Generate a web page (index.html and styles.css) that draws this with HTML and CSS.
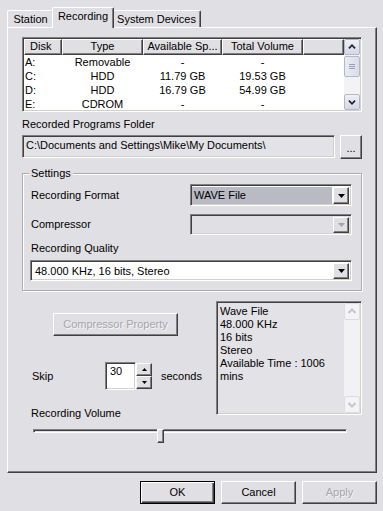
FILE: index.html
```html
<!DOCTYPE html>
<html>
<head>
<meta charset="utf-8">
<link rel="stylesheet" href="styles.css">
</head>
<body>
<div class="tabs">
  <div class="tab t1">Station</div>
  <div class="tab t2 sel">Recording</div>
  <div class="tab t3">System Devices</div>
</div>
<div class="panel">
  <div class="list">
    <div class="lmain">
      <div class="lhead">
        <div class="hc c1 left">Disk</div>
        <div class="hc c2">Type</div>
        <div class="hc c3">Available Sp...</div>
        <div class="hc c4">Total Volume</div>
        <div class="hc c5"></div>
      </div>
      <div class="lrow"><span class="c1 left">A:</span><span class="c2">Removable</span><span class="c3">-</span><span class="c4">-</span></div>
      <div class="lrow"><span class="c1 left">C:</span><span class="c2">HDD</span><span class="c3">11.79 GB</span><span class="c4">19.53 GB</span></div>
      <div class="lrow"><span class="c1 left">D:</span><span class="c2">HDD</span><span class="c3">16.79 GB</span><span class="c4">54.99 GB</span></div>
      <div class="lrow"><span class="c1 left">E:</span><span class="c2">CDROM</span><span class="c3">-</span><span class="c4">-</span></div>
    </div>
    <div class="vs">
      <div class="sb"><svg width="16" height="14" viewBox="0 0 16 14"><polyline points="4.5,8.5 8,5 11.5,8.5" fill="none" stroke="#1f2330" stroke-width="2"/></svg></div>
      <div class="sthumb"><svg width="14" height="19" viewBox="0 0 14 19"><g stroke="#9aa0b4" stroke-width="1"><line x1="4" y1="7.5" x2="10" y2="7.5"/><line x1="4" y1="9.5" x2="10" y2="9.5"/><line x1="4" y1="11.5" x2="10" y2="11.5"/></g></svg></div>
      <div class="sfill"></div>
      <div class="sb"><svg width="16" height="14" viewBox="0 0 16 14"><polyline points="4.5,5.5 8,9 11.5,5.5" fill="none" stroke="#1f2330" stroke-width="2"/></svg></div>
    </div>
  </div>

  <div class="lbl folder-lbl">Recorded Programs Folder</div>
  <div class="folder">
    <div class="tb">C:\Documents and Settings\Mike\My Documents\</div>
    <div class="raised dots">...</div>
  </div>

  <div class="grp">
    <span class="legend">Settings</span>
    <div class="frow">
      <span class="flbl">Recording Format</span>
      <div class="combo fmt"><div class="val sel-val">WAVE File</div><div class="dd"><svg width="7" height="4" viewBox="0 0 7 4"><polygon points="0,0 7,0 3.5,4" fill="#000"/></svg></div></div>
    </div>
    <div class="frow r2">
      <span class="flbl">Compressor</span>
      <div class="combo fmt dis"><div class="val"></div><div class="dd"><svg width="7" height="4" viewBox="0 0 7 4"><polygon points="0,0 7,0 3.5,4" fill="#a6a5aa"/></svg></div></div>
    </div>
    <div class="lbl qlbl">Recording Quality</div>
    <div class="combo qual"><div class="val">48.000 KHz, 16 bits, Stereo</div><div class="dd"><svg width="7" height="4" viewBox="0 0 7 4"><polygon points="0,0 7,0 3.5,4" fill="#000"/></svg></div></div>
  </div>

  <div class="lower">
    <div class="lcol">
      <div class="raised cpbtn disabled">Compressor Property</div>
      <div class="skip">
        <span class="sl">Skip</span>
        <div class="spin">
          <div class="st">30</div>
          <div class="sbs">
            <div class="raised sp"><svg width="5" height="3" viewBox="0 0 5 3"><polygon points="0,3 5,3 2.5,0" fill="#000"/></svg></div>
            <div class="raised sp"><svg width="5" height="3" viewBox="0 0 5 3"><polygon points="0,0 5,0 2.5,3" fill="#000"/></svg></div>
          </div>
        </div>
        <span class="secs">seconds</span>
      </div>
      <div class="lbl vol">Recording Volume</div>
    </div>
    <div class="info">
      <div class="itxt">Wave File<br>48.000 KHz<br>16 bits<br>Stereo<br>Available Time : 1006 mins</div>
      <div class="vs dis">
        <div class="sb"><svg width="14" height="15" viewBox="0 0 14 15"><polyline points="3.5,9 7,5.5 10.5,9" fill="none" stroke="#c3c6d2" stroke-width="2"/></svg></div>
        <div class="sfill"></div>
        <div class="sb"><svg width="14" height="15" viewBox="0 0 14 15"><polyline points="3.5,6 7,9.5 10.5,6" fill="none" stroke="#c3c6d2" stroke-width="2"/></svg></div>
      </div>
    </div>
  </div>

  <div class="slider">
    <div class="track"></div>
    <div class="thumb"></div>
  </div>
</div>

<div class="btns">
  <div class="btn def">OK</div>
  <div class="btn raised">Cancel</div>
  <div class="btn raised disabled">Apply</div>
</div>
</body>
</html>
```

FILE: styles.css
```css
html, body {
  margin: 0;
  padding: 0;
}
body {
  background: #e0dfe3;
  font: 11px/13px "Liberation Sans", Arial, sans-serif;
  color: #000;
  width: 383px;
  height: 511px;
  overflow: hidden;
}

.raised {
  box-sizing: border-box;
  border: 1px solid;
  border-color: #fff #404040 #404040 #fff;
  box-shadow: inset -1px -1px #808080;
  background: #e0dfe3;
}
.disabled {
  color: #a6a5aa;
  text-shadow: 1px 1px #f6f6f8;
}

/* tabs */
.tabs {
  display: flex;
  align-items: flex-end;
  height: 27px;
  padding-left: 7px;
}
.tab {
  box-sizing: border-box;
  height: 17px;
  border-top: 1px solid #fff;
  border-left: 1px solid #fff;
  border-right: 1px solid #404040;
  box-shadow: inset -1px 0 #808080;
  border-radius: 2px 2px 0 0;
  background: #e0dfe3;
  text-align: center;
  padding-top: 2px;
  line-height: 13px;
}
.t1 { width: 47px; }
.t2 { width: 62px; }
.t3 { width: 89px; }
.tab.sel {
  height: 21px;
  margin: 0 -2px -1px -2px;
  position: relative;
  z-index: 1;
  padding-top: 2px;
}

/* panel */
.panel {
  box-sizing: border-box;
  width: 370px;
  height: 446px;
  margin-left: 7px;
  border: 1px solid;
  border-color: #fff #404040 #404040 #fff;
  box-shadow: inset -1px -1px #808080;
  padding: 9px 14px 0 14px;
}

/* list view */
.list {
  box-sizing: border-box;
  display: flex;
  height: 75px;
  border: 1px solid;
  border-color: #808080 #fff #fff #808080;
  box-shadow: inset 1px 1px #404040, inset -1px -1px #d4d0c8;
  padding: 1px;
  background: #fff;
}
.lmain {
  flex: 1;
  overflow: hidden;
}
.lhead {
  display: flex;
  height: 16px;
}
.hc {
  box-sizing: border-box;
  height: 16px;
  border: 1px solid;
  border-color: #fff #404040 #404040 #fff;
  box-shadow: inset -1px -1px #808080;
  background: #e0dfe3;
  text-align: center;
  line-height: 13px;
  white-space: nowrap;
  overflow: hidden;
}
.hc.left { text-align: left; padding-left: 5px; }
.lrow {
  display: flex;
  height: 14px;
  line-height: 14px;
  white-space: nowrap;
}
.lrow span { text-align: center; }
.lrow span.left { text-align: left; padding-left: 1px; box-sizing: border-box; }
.c1 { width: 38px; }
.c2 { width: 81px; }
.c3 { width: 79px; }
.c4 { width: 81px; }
.c5 { width: 41px; }

/* scrollbars */
.vs {
  width: 16px;
  display: flex;
  flex-direction: column;
  background: #f3f3f6;
}
.sb {
  box-sizing: border-box;
  height: 16px;
  border: 1px solid #b3b7c8;
  border-radius: 2px;
  background: linear-gradient(#eff0f7, #d5d8e6);
  display: flex;
  align-items: center;
  justify-content: center;
}
.sthumb {
  box-sizing: border-box;
  height: 21px;
  margin-top: 1px;
  border: 1px solid #b3b7c8;
  border-radius: 2px;
  background: linear-gradient(90deg, #e9ebf4, #dadcea);
  display: flex;
  align-items: center;
  justify-content: center;
}
.sfill { flex: 1; }
.vs.dis { background: #f2f2f5; }
.vs.dis .sb {
  border-color: #dcdce3;
  background: #f4f4f7;
  height: 17px;
}

/* folder */
.lbl { line-height: 13px; white-space: nowrap; }
.folder-lbl { margin-top: 6px; }
.folder {
  display: flex;
  gap: 5px;
  margin-top: 4px;
}
.tb {
  box-sizing: border-box;
  width: 313px;
  height: 23px;
  border: 1px solid;
  border-color: #808080 #fff #fff #808080;
  box-shadow: inset 1px 1px #404040, inset -1px -1px #d4d0c8;
  background: #e3e2e6;
  padding: 3px 0 0 3px;
  white-space: nowrap;
  overflow: hidden;
}
.dots {
  width: 22px;
  height: 24px;
  text-align: center;
  line-height: 24px;
}

/* group */
.grp {
  box-sizing: border-box;
  position: relative;
  margin-top: 14px;
  height: 118px;
  border: 1px solid #aeadb3;
  box-shadow: inset 1px 1px #fff, 1px 1px #fff;
  padding: 10px 9px 0 7px;
}
.legend {
  position: absolute;
  top: -7px;
  left: 6px;
  padding: 0 2px;
  background: #e0dfe3;
}
.frow {
  display: flex;
  align-items: center;
  height: 22px;
}
.frow.r2 { margin-top: 8px; height: 21px; }
.flbl { padding-left: 1px; }
.combo {
  box-sizing: border-box;
  display: flex;
  height: 21px;
  border: 1px solid;
  border-color: #808080 #fff #fff #808080;
  box-shadow: inset 1px 1px #404040, inset -1px -1px #d4d0c8;
  padding: 2px 2px 1px 2px;
  background: #fff;
}
.combo .val {
  flex: 1;
  line-height: 16px;
  padding-left: 1px;
  white-space: nowrap;
}
.combo .dd {
  box-sizing: border-box;
  width: 16px;
  border: 1px solid;
  border-color: #fff #404040 #404040 #fff;
  box-shadow: inset -1px -1px #808080;
  background: #e0dfe3;
  display: flex;
  align-items: center;
  justify-content: center;
}
.combo.fmt {
  width: 162px;
  height: 22px;
  margin-left: auto;
}
.frow.r2 .combo { height: 21px; }
.combo .sel-val { background: #b9bac4; margin: 0 1px 0 -1px; padding-left: 2px; line-height: 17px; }
.combo.dis { background: #e0dfe3; }
.qlbl { margin-top: 7px; padding-left: 1px; }
.combo.qual { margin-top: 5px; width: 322px; }
.combo.qual .val { padding-left: 2px; }

/* lower */
.lower {
  display: flex;
  margin-top: 10px;
}
.lcol { width: 194px; }
.cpbtn {
  margin: 12px 0 0 31px;
  width: 125px;
  height: 23px;
  text-align: center;
  line-height: 21px;
}
.skip {
  display: flex;
  align-items: center;
  height: 28px;
  margin-top: 26px;
}
.sl {
  box-sizing: border-box;
  width: 83px;
  padding-left: 10px;
}
.spin {
  display: flex;
  height: 28px;
}
.st {
  box-sizing: border-box;
  width: 31px;
  height: 28px;
  border: 1px solid;
  border-color: #808080 #fff #fff #808080;
  box-shadow: inset 1px 1px #404040, inset -1px -1px #d4d0c8;
  background: #fff;
  padding: 2px 0 0 4px;
}
.sbs {
  display: flex;
  flex-direction: column;
  width: 16px;
  padding: 1px 0;
  box-sizing: border-box;
}
.sp {
  flex: 1;
  display: flex;
  align-items: center;
  justify-content: center;
}
.secs { margin-left: 9px; }
.vol { margin: 17px 0 0 9px; }

.info {
  box-sizing: border-box;
  display: flex;
  width: 146px;
  height: 114px;
  border: 1px solid;
  border-color: #808080 #fff #fff #808080;
  box-shadow: inset 1px 1px #404040, inset -1px -1px #d4d0c8;
  padding: 1px;
  background: #e3e2e6;
}
.itxt {
  flex: 1;
  padding: 2px 0 0 2px;
  line-height: 13px;
}

/* slider */
.slider {
  position: relative;
  width: 314px;
  height: 14px;
  margin: 9px 0 0 11px;
}
.track {
  box-sizing: border-box;
  height: 4px;
  margin-top: 5px;
  border: 1px solid;
  border-color: #808080 #fff #fff #808080;
  box-shadow: inset 1px 1px #404040;
}
.thumb {
  position: absolute;
  left: 124px;
  top: 0;
  box-sizing: border-box;
  width: 7px;
  height: 14px;
  border: 1px solid;
  border-color: #fff #404040 #404040 #fff;
  box-shadow: inset -1px -1px #808080;
  background: #e0dfe3;
}

/* buttons */
.btns {
  display: flex;
  justify-content: flex-end;
  gap: 6px;
  padding-right: 6px;
  margin-top: 8px;
}
.btn {
  box-sizing: border-box;
  width: 75px;
  height: 23px;
  text-align: center;
  line-height: 21px;
}
.btn.def {
  border: 1px solid #000;
  box-shadow: inset 1px 1px #fff, inset -1px -1px #404040, inset -2px -2px #808080;
  background: #e0dfe3;
}
```
